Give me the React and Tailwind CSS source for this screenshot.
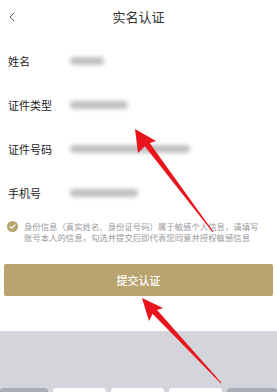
import { ChevronLeft } from "lucide-react";

const rows = [
  { label: "姓名", w: "w-[34px]" },
  { label: "证件类型", w: "w-[58px]" },
  { label: "证件号码", w: "w-[120px]" },
  { label: "手机号", w: "w-[68px]" },
];

export default function App() {
  return (
    <div className="relative w-[277px] h-[392px] overflow-hidden bg-white font-['Noto_Sans_CJK_SC',sans-serif] text-[#222]">
      {/* header */}
      <div className="relative h-[34px] flex items-center justify-center">
        <ChevronLeft className="absolute left-[4px] top-[9px] text-[#555]" size={16} strokeWidth={1.5} />
        <span className="text-[13px] text-[#333]">实名认证</span>
      </div>

      {/* form */}
      <div className="mt-[5px]">
        {rows.map((r) => (
          <div key={r.label} className="h-[44px] flex items-center px-[8px]">
            <span className="w-[62px] text-[11px] text-[#222]">{r.label}</span>
            <div className={`${r.w} h-[8px] rounded-full bg-[#bfbfbf] blur-[2px]`} />
          </div>
        ))}
      </div>

      {/* agreement */}
      <div className="flex gap-[6px] px-[7px] mt-[6px]">
        <div className="shrink-0 w-[11px] h-[11px] rounded-full bg-[#b8a46f] flex items-center justify-center">
          <svg width="7" height="7" viewBox="0 0 10 10" fill="none">
            <path d="M1.5 5.2 L4 7.5 L8.5 2.8" stroke="#fff" strokeWidth="1.6" strokeLinecap="round" strokeLinejoin="round" />
          </svg>
        </div>
        <p className="whitespace-nowrap text-[8.4px] leading-[11px] text-[#9a9a9a]">
          身份信息（真实姓名、身份证号码）属于敏感个人信息，请填写
          <br />
          账号本人的信息，勾选并提交后即代表您同意并授权敏感信息
        </p>
      </div>

      {/* button */}
      <div className="px-[4px] mt-[21px]">
        <div className="h-[32px] rounded-[2px] bg-[#b9a36e] flex items-center justify-center">
          <span className="text-[11px] font-medium text-white">提交认证</span>
        </div>
      </div>

      {/* keyboard area */}
      <div className="absolute left-0 right-0 top-[331px] bottom-0 bg-[#d3d5da]">
        <div className="absolute bottom-[-6px] left-0 right-0 flex gap-[5px]">
          <div className="w-[48px] h-[10px] rounded-[3px] bg-[#a9adb5]" />
          <div className="w-[53px] h-[10px] rounded-[3px] bg-white" />
          <div className="w-[53px] h-[10px] rounded-[3px] bg-white" />
          <div className="w-[53px] h-[10px] rounded-[3px] bg-white" />
          <div className="flex-1 h-[10px] rounded-[3px] bg-[#a9adb5]" />
        </div>
      </div>

      {/* red arrows overlay */}
      <svg className="absolute inset-0 pointer-events-none" width="277" height="392" viewBox="0 0 277 392">
        <defs>
          <filter id="soft" x="-20%" y="-20%" width="140%" height="140%">
            <feGaussianBlur stdDeviation="0.6" />
          </filter>
        </defs>
        <g filter="url(#soft)" fill="#e8141b">
          <polygon points="148.4,141.2 213.4,231.7 212.6,232.3 143.6,144.8" />
          <polygon points="135,129 156,141 147,144 138,153" />
          <polygon points="156.2,309 221.4,382.7 220.6,383.3 151.8,313" />
          <polygon points="142,298 163,308 154,311 149,321" />
        </g>
      </svg>
    </div>
  );
}
